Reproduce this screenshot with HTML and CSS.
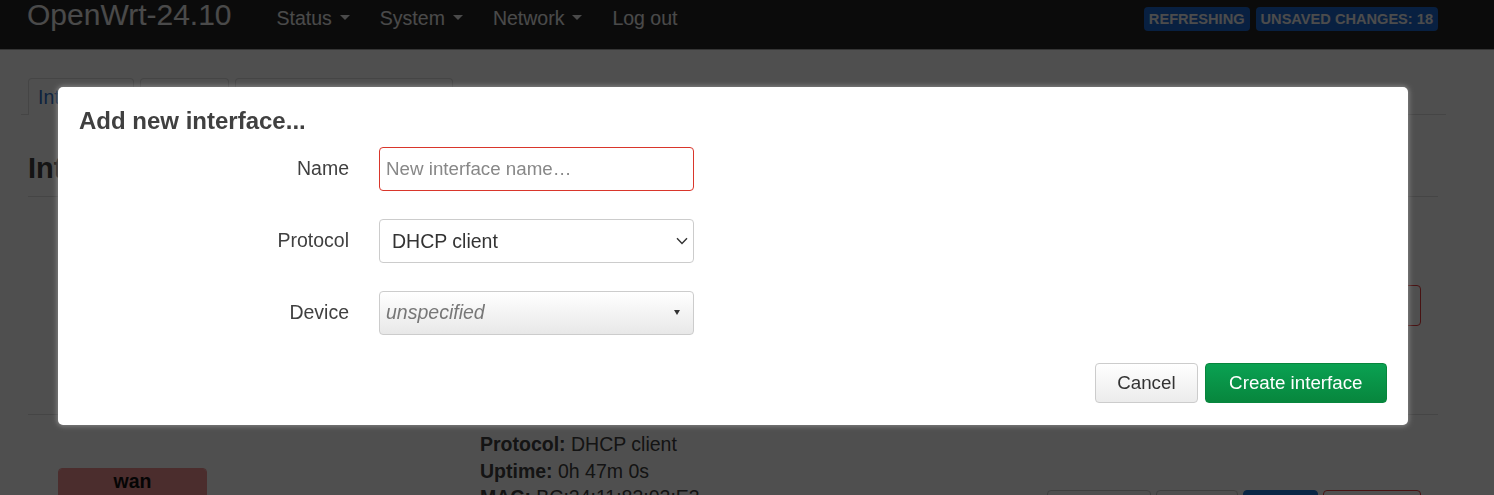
FILE: index.html
```html
<!DOCTYPE html>
<html lang="en">
<head>
  <meta charset="UTF-8">
  <title>OpenWrt – Interfaces</title>
  <meta name="viewport" content="width=device-width, initial-scale=1">
  <link rel="stylesheet" href="styles.css">
</head>
<body>
<header class="topbar">
  <a class="brand" href="#">OpenWrt-24.10</a>
  <ul class="nav">
    <li><a href="#">Status<span class="caret"></span></a></li>
    <li><a href="#">System<span class="caret"></span></a></li>
    <li><a href="#">Network<span class="caret"></span></a></li>
    <li><a href="#">Log out</a></li>
  </ul>
  <div class="indicators">
    <span class="badge">Refreshing</span>
    <span class="badge">Unsaved changes: 18</span>
  </div>
</header>

<main class="container">
  <ul class="tabs">
    <li class="active"><a href="#">Interfaces</a></li>
    <li><a href="#">Devices</a></li>
    <li><a href="#">Global network options</a></li>
  </ul>
  <h2>Interfaces</h2>

  <div class="iface-table">
    <div class="iface-row">
      <div class="ifbadge lan">
        <div class="ifname">lan</div>
        <div class="ifdev">br-lan</div>
      </div>
      <div class="ifinfo">
        <div><strong>Protocol:</strong> Static address</div>
        <div><strong>Uptime:</strong> 0h 47m 12s</div>
        <div><strong>MAC:</strong> BC:24:11:5A:0D:71</div>
        <div><strong>RX:</strong> 2.31 MB (18842 Pkts.)</div>
        <div><strong>TX:</strong> 6.04 MB (12230 Pkts.)</div>
        <div><strong>IPv4:</strong> 192.168.1.1/24</div>
        <div><strong>IPv6:</strong> fd4c:2b9e:7a1f::1/60</div>
      </div>
      <div class="actions">
        <button class="row-btn">Restart</button>
        <button class="row-btn">Stop</button>
        <button class="row-btn edit">Edit</button>
        <button class="row-btn remove">Delete</button>
      </div>
    </div>
    <div class="iface-row">
      <div class="ifbadge wan">
        <div class="ifname">wan</div>
        <div class="ifdev">eth1</div>
      </div>
      <div class="ifinfo">
        <div><strong>Protocol:</strong> DHCP client</div>
        <div><strong>Uptime:</strong> 0h 47m 0s</div>
        <div><strong>MAC:</strong> BC:24:11:83:02:E3</div>
        <div><strong>RX:</strong> 1.41 MB (10126 Pkts.)</div>
        <div><strong>TX:</strong> 412.22 KB (2877 Pkts.)</div>
        <div><strong>IPv4:</strong> 10.0.2.15/24</div>
      </div>
      <div class="actions">
        <button class="row-btn">Restart</button>
        <button class="row-btn">Stop</button>
        <button class="row-btn edit">Edit</button>
        <button class="row-btn remove">Delete</button>
      </div>
    </div>
  </div>
</main>

<div class="modal-overlay">
  <div class="modal">
    <h3>Add new interface...</h3>
    <div class="form">
      <label for="if-name">Name</label>
      <input id="if-name" class="invalid" placeholder="New interface name…">

      <label for="if-proto">Protocol</label>
      <span class="select-wrap">
        <select id="if-proto">
          <option>DHCP client</option>
          <option>Static address</option>
          <option>Unmanaged</option>
        </select>
        <svg class="chevron" width="12" height="8" viewBox="0 0 12 8"><path d="M1 1.2 6 6.4 11 1.2" fill="none" stroke="#333" stroke-width="1.4"/></svg>
      </span>

      <label>Device</label>
      <div class="dropdown">
        <em>unspecified</em>
        <span class="open-arrow"></span>
      </div>
    </div>
    <div class="modal-footer">
      <button class="btn">Cancel</button>
      <button class="btn btn-save">Create interface</button>
    </div>
  </div>
</div>
</body>
</html>
```

FILE: styles.css
```css
body {
  margin: 0;
  font-family: "Liberation Sans", Arial, sans-serif;
  font-size: 19.5px;
  color: #404040;
  background: #fff;
}

/* top bar */
.topbar {
  display: flex;
  align-items: baseline;
  height: 49px;
  padding: 0 56px 0 27px;
  background: #262626;
  border-bottom: 1px solid #aaa;
}
.brand {
  font-size: 30px;
  line-height: 30px;
  color: #eee;
  text-decoration: none;
  margin-right: 30px;
}
.nav {
  display: flex;
  list-style: none;
  margin: 0;
  padding: 0;
}
.nav a {
  display: block;
  padding: 0 15px;
  line-height: 30px;
  color: #eee;
  text-decoration: none;
}
.caret {
  display: inline-block;
  margin-left: 8px;
  border-top: 5px solid #eee;
  border-left: 5px solid transparent;
  border-right: 5px solid transparent;
  vertical-align: 5px;
}
.indicators {
  display: flex;
  gap: 6px;
  margin-left: auto;
  margin-top: 7px;
  align-self: flex-start;
}
.badge {
  background: #1c68d0;
  color: #f4f4f4;
  font-size: 14.6px;
  font-weight: bold;
  line-height: 24px;
  padding: 0 5px;
  border-radius: 4px;
  text-transform: uppercase;
}

/* page */
.container {
  padding: 28px 56px 0 28px;
}
.tabs {
  display: flex;
  gap: 6px;
  list-style: none;
  margin: 0 -8px 0 -7px;
  padding: 0 0 0 7px;
  border-bottom: 1px solid #ddd;
}
.tabs li {
  border: 1px solid #ddd;
  border-bottom: 0;
  border-radius: 4px 4px 0 0;
  line-height: 36px;
  padding: 0 9px;
  margin-bottom: -1px;
}
.tabs li.active {
  background: #fff;
}
.tabs a {
  color: #2a6fc9;
  text-decoration: none;
}
h2 {
  font-size: 29px;
  line-height: 1.2;
  margin: 35.6px 0 10.6px;
  color: #404040;
}
.iface-table {
  border-top: 1px solid #ddd;
}
.iface-row {
  display: grid;
  grid-template-columns: 452px 1fr auto;
  align-items: center;
  padding: 16px 17px 16px 0;
  border-bottom: 1px solid #ddd;
  line-height: 26.5px;
}
.ifbadge {
  margin-left: 30px;
  width: 147px;
  border: 1px solid #ccc;
  border-radius: 4px;
  overflow: hidden;
  text-align: center;
  color: #111;
}
.ifbadge.lan {
  border-color: #90f090;
}
.ifbadge.wan {
  border-color: #f09090;
}
.ifname {
  font-weight: bold;
  line-height: 22px;
  padding: 1px 0 5px;
}
.lan .ifname {
  background: #90f090;
}
.wan .ifname {
  background: #f09090;
}
.ifdev {
  padding: 15px 0;
  font-size: 16px;
}
.actions {
  display: flex;
  gap: 4.5px;
}
.row-btn {
  height: 41px;
  padding: 0 20px;
  font-family: inherit;
  font-size: 19.5px;
  color: #404040;
  background: linear-gradient(#fff, #e6e6e6);
  border: 1px solid #ccc;
  border-radius: 4px;
}
.row-btn.edit {
  background: #2077db;
  border-color: #2077db;
  color: #fff;
}
.row-btn.remove {
  background: #fff;
  border-color: #e83a3a;
  color: #e83a3a;
}

/* modal */
.modal-overlay {
  position: fixed;
  inset: 0;
  background: rgba(0, 0, 0, .69);
  padding: 87px 0 0 58px;
}
.modal {
  width: 1350px;
  box-sizing: border-box;
  background: #fff;
  border-radius: 5px;
  padding: 20px 21px 22px;
  box-shadow: 0 0 5px 1px rgba(170, 170, 170, .6);
}
.modal h3 {
  font-size: 24px;
  line-height: 28.8px;
  margin: 0 0 11.2px;
  color: #404040;
}
.form {
  display: grid;
  grid-template-columns: 270px 315px;
  column-gap: 30px;
  row-gap: 28px;
  align-items: center;
}
.form label {
  text-align: right;
}
.form input,
.form select,
.dropdown {
  box-sizing: border-box;
  width: 315px;
  height: 44px;
  border: 1px solid #ccc;
  border-radius: 4px;
  font-family: inherit;
  color: #333;
}
.form input {
  padding: 0 6px;
  font-size: 18.75px;
}
.form input.invalid {
  border-color: #d9362b;
}
.form input::placeholder {
  color: #888;
}
.select-wrap {
  position: relative;
  display: block;
  width: 315px;
  height: 44px;
}
.form select {
  appearance: none;
  display: block;
  padding: 0 12px;
  font-size: 19.5px;
  background: #fff;
}
.chevron {
  position: absolute;
  right: 6px;
  top: 18px;
  pointer-events: none;
}
.dropdown {
  display: flex;
  align-items: center;
  justify-content: space-between;
  padding: 0 13px 0 6px;
  background: linear-gradient(#fff, #e8e8e8);
}
.dropdown em {
  color: #777;
}
.open-arrow {
  border-top: 5px solid #333;
  border-left: 3px solid transparent;
  border-right: 3px solid transparent;
}
.modal-footer {
  display: flex;
  justify-content: flex-end;
  gap: 7px;
  margin-top: 28px;
}
.btn {
  height: 40px;
  padding: 0 21px;
  font-family: inherit;
  font-size: 18.75px;
  color: #333;
  background: linear-gradient(#fff, #ececec);
  border: 1px solid #ccc;
  border-radius: 4px;
}
.btn-save {
  padding: 0 23.5px;
  color: #fff;
  background: linear-gradient(#0aa152, #07863d);
  border-color: #07863d;
}
```
